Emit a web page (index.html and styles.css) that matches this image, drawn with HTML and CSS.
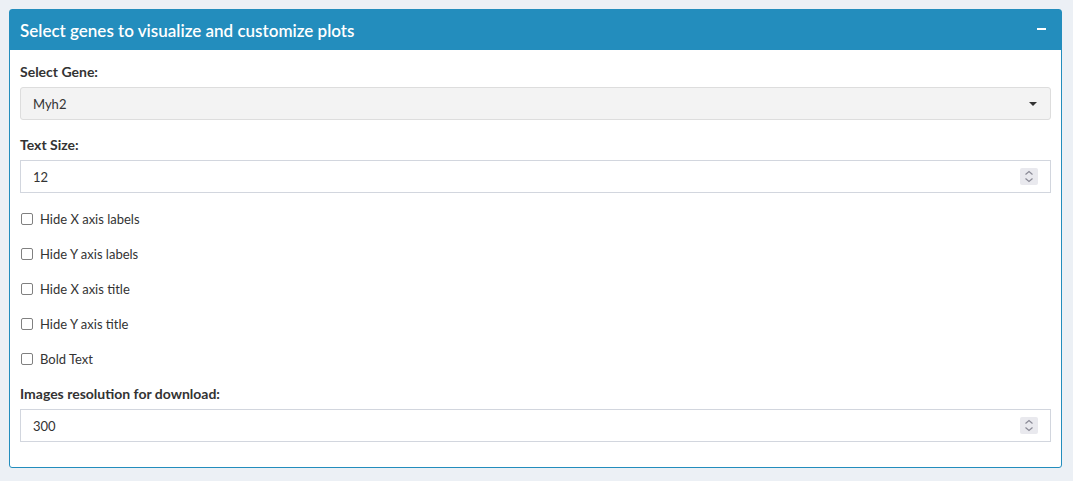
FILE: index.html
```html
<!DOCTYPE html>
<html>
<head>
<meta charset="utf-8">
<link rel="stylesheet" href="styles.css">
</head>
<body>
<div class="box">
  <div class="box-header">
    <h3 class="box-title">Select genes to visualize and customize plots</h3>
    <span class="collapse-btn"></span>
  </div>
  <div class="box-body">
    <div class="form-group">
      <label class="control-label">Select Gene:</label>
      <div class="select">
        <span>Myh2</span>
        <span class="caret"></span>
      </div>
    </div>
    <div class="form-group">
      <label class="control-label">Text Size:</label>
      <div class="num-input">
        <span>12</span>
        <span class="spinner">
          <svg width="18" height="17" viewBox="0 0 18 17"><path d="M5.5 6.5 L9 3.5 L12.5 6.5" fill="none" stroke="#8a8a96" stroke-width="1.2"/><path d="M5.5 10.5 L9 13.5 L12.5 10.5" fill="none" stroke="#8a8a96" stroke-width="1.2"/></svg>
        </span>
      </div>
    </div>
    <div class="checks">
      <div class="check"><span class="cb"></span><span>Hide X axis labels</span></div>
      <div class="check"><span class="cb"></span><span>Hide Y axis labels</span></div>
      <div class="check"><span class="cb"></span><span>Hide X axis title</span></div>
      <div class="check"><span class="cb"></span><span>Hide Y axis title</span></div>
      <div class="check"><span class="cb"></span><span>Bold Text</span></div>
    </div>
    <div class="form-group">
      <label class="control-label">Images resolution for download:</label>
      <div class="num-input">
        <span>300</span>
        <span class="spinner">
          <svg width="18" height="17" viewBox="0 0 18 17"><path d="M5.5 6.5 L9 3.5 L12.5 6.5" fill="none" stroke="#8a8a96" stroke-width="1.2"/><path d="M5.5 10.5 L9 13.5 L12.5 10.5" fill="none" stroke="#8a8a96" stroke-width="1.2"/></svg>
        </span>
      </div>
    </div>
  </div>
</div>
</body>
</html>
```

FILE: styles.css
```css
html, body {
  margin: 0;
  padding: 0;
}
body {
  background: #ecf0f5;
  font-family: Lato, "Open Sans", sans-serif;
  color: #333;
  padding: 9px 11px 0 9px;
}
.box {
  background: #fff;
  border: 1px solid #238dbd;
  border-radius: 3px;
}
.box-header {
  background: #238dbd;
  height: 40px;
  display: flex;
  align-items: center;
  justify-content: space-between;
  padding: 0 15px 0 10px;
}
.box-title {
  margin: 0;
  color: #fff;
  font-size: 17px;
  font-weight: 600;
}
.collapse-btn {
  display: block;
  width: 9px;
  height: 1.5px;
  background: #fff;
  margin-top: -2px;
}
.box-body {
  padding: 11px 10px 11px 10px;
}
.form-group {
  margin-bottom: 14px;
}
.control-label {
  display: block;
  font-size: 14px;
  font-weight: 700;
  line-height: 21px;
  margin-bottom: 5px;
  color: #333;
}
.select {
  height: 31px;
  background: #f3f3f3;
  border: 1px solid #ddd;
  border-radius: 3px;
  display: flex;
  align-items: center;
  justify-content: space-between;
  padding: 0 13px 0 12px;
  font-size: 13px;
}
.caret {
  width: 0;
  height: 0;
  border-left: 4px solid transparent;
  border-right: 4px solid transparent;
  border-top: 4px solid #333;
}
.num-input {
  height: 31px;
  border: 1px solid #d2d6de;
  display: flex;
  align-items: center;
  justify-content: space-between;
  padding: 0 12px 0 12px;
  font-size: 13px;
}
.spinner {
  display: block;
  width: 18px;
  height: 17px;
  background: #e9e9ee;
  border-radius: 2px;
}
.spinner svg {
  display: block;
}
.checks {
  display: flex;
  flex-direction: column;
  gap: 15px;
  padding-top: 2px;
  margin-bottom: 14px;
}
.check {
  height: 20px;
  display: flex;
  align-items: center;
  gap: 7px;
  font-size: 13px;
  padding-left: 1px;
}
.cb {
  width: 10px;
  height: 10px;
  border: 1.5px solid #808080;
  border-radius: 2px;
  background: #fff;
}
```
